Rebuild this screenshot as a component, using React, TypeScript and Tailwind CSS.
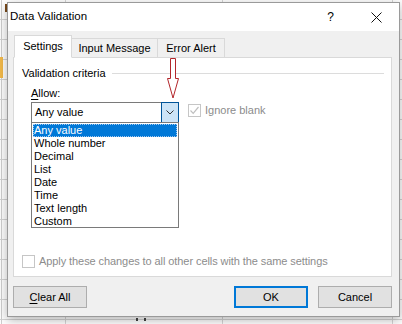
import React from 'react';

const listItems = ['Any value', 'Whole number', 'Decimal', 'List', 'Date', 'Time', 'Text length', 'Custom'];

function Tab({ label, active, width }: { label: string; active?: boolean; width: string }) {
  return (
    <div
      className={`${width} flex items-center justify-center border border-[#d9d9d9] ${
        active ? 'h-[23px] bg-white border-b-white relative z-10' : 'h-[20px] bg-[#f0f0f0] -ml-px'
      }`}
    >
      {label}
    </div>
  );
}

function Checkbox({ checked }: { checked?: boolean }) {
  return (
    <div className="w-[13px] h-[13px] border border-[#c6c6c6] bg-white flex items-center justify-center shrink-0">
      {checked && (
        <svg width="11" height="11" viewBox="0 0 11 11">
          <path d="M1.5 5.5 L4.2 8.3 L9.5 2" fill="none" stroke="#bfbfbf" strokeWidth="1.2" />
        </svg>
      )}
    </div>
  );
}

function Button({ children, primary }: { children: React.ReactNode; primary?: boolean }) {
  return (
    <div
      className={`w-[74px] h-[22px] flex items-center justify-center bg-[#e1e1e1] ${
        primary ? 'border-2 border-[#0078d7]' : 'border border-[#adadad]'
      }`}
    >
      {children}
    </div>
  );
}

export default function App() {
  return (
    <div
      className="relative w-[402px] h-[324px] overflow-hidden bg-white pt-[2px] pl-[7px] text-[11px] text-black"
      style={{ fontFamily: '"Liberation Sans", Arial, sans-serif' }}
    >
      {/* spreadsheet grid behind the dialog */}
      <div className="absolute inset-0 bg-[linear-gradient(to_right,transparent_1px,#cfcfcf_1px,#cfcfcf_2px,transparent_2px,transparent_65px,#d6d6d6_65px,#d6d6d6_66px,transparent_66px,transparent_222px,#d6d6d6_222px,#d6d6d6_223px,transparent_223px,transparent_392px,#d6d6d6_392px,#d6d6d6_393px,transparent_393px),linear-gradient(to_bottom,transparent_19px,#d6d6d6_19px,#d6d6d6_20px,transparent_20px)] bg-[length:100%_100%,100%_20px]" />
      <div className="absolute left-0 top-[57px] w-[3px] h-[21px] bg-[#f3b94a]" />
      <div className="absolute left-[5px] top-[4px] w-[2px] h-[8px] bg-[#7a4a1a]" />
      <div className="absolute left-[136px] top-[318px] w-[2px] h-[3px] bg-[#444]" />
      <div className="absolute left-[144px] top-[318px] w-[2px] h-[3px] bg-[#444]" />

      {/* dialog */}
      <div className="relative w-[393px] h-[315px] border border-[#9a9a9a] bg-[#f0f0f0] shadow-[0_3px_10px_rgba(0,0,0,0.3)] flex flex-col">
        {/* title bar */}
        <div className="h-[28px] bg-white flex items-center pl-[2px] pr-[17px] text-[11.5px] shrink-0">
          <span>Data Validation</span>
          <span className="ml-auto mr-[37px] text-[12px]">?</span>
          <svg width="11" height="11" viewBox="0 0 11 11">
            <path d="M0.5 0.5 L10.5 10.5 M10.5 0.5 L0.5 10.5" stroke="#111" strokeWidth="1" />
          </svg>
        </div>

        {/* body */}
        <div className="flex-1 flex flex-col px-[5px] pr-[7px]">
          <div className="flex items-end mt-[4px] ml-px -mb-px">
            <Tab label="Settings" active width="w-[58px]" />
            <Tab label="Input Message" width="w-[87px]" />
            <Tab label="Error Alert" width="w-[68px]" />
          </div>

          <div className="h-[220px] bg-white border border-[#d9d9d9] flex flex-col">
            <div className="flex items-center mt-[8px] pl-[8px] pr-[7px] h-[14px]">
              <span>Validation criteria</span>
              <div className="flex-1 h-px bg-[#dcdcdc] ml-[6px]" />
            </div>

            <div className="flex pl-[17px] mt-[6px]">
              <div className="flex flex-col">
                <div className="h-[14px] leading-[14px]">
                  <span className="underline underline-offset-2">A</span>llow:
                </div>
                <div className="flex h-[21px] mt-[2px]">
                  <div className="w-[130px] border-y border-l border-[#7a7a7a] bg-white flex items-center pl-[3px]">
                    Any value
                  </div>
                  <div className="w-[18px] border border-[#005499] bg-[#cce4f7] flex items-center justify-center">
                    <svg width="8" height="5" viewBox="0 0 8 5">
                      <path d="M0.5 0.5 L4 4 L7.5 0.5" fill="none" stroke="#333" strokeWidth="1" />
                    </svg>
                  </div>
                </div>
                <div className="w-[148px] h-[106px] border border-[#7a7a7a] -mt-px bg-white p-px">
                  {listItems.map((item, i) => (
                    <div
                      key={item}
                      className={`h-[13px] leading-[13px] pl-px ${
                        i === 0 ? 'bg-[#0078d7] text-white outline outline-1 outline-dotted outline-[#9fc7ee] -outline-offset-1' : ''
                      }`}
                    >
                      {item}
                    </div>
                  ))}
                </div>
              </div>

              <div className="flex items-center gap-[4px] ml-[9px] mt-[18px] h-[13px] text-[#8c8c8c]">
                <Checkbox checked />
                <span>Ignore blank</span>
              </div>
            </div>

            <div className="flex items-center gap-[4px] pl-[8px] mt-[25px] text-[#8c8c8c]">
              <Checkbox />
              <span className="tracking-[-0.08px]">Apply these changes to all other cells with the same settings</span>
            </div>
          </div>

          <div className="flex items-center justify-between mt-[9px]">
            <Button>
              <span className="underline underline-offset-2">C</span>lear All
            </Button>
            <div className="flex gap-[10px]">
              <Button primary>OK</Button>
              <Button>Cancel</Button>
            </div>
          </div>
        </div>

        {/* red annotation arrow */}
        <svg className="absolute left-[158px] top-[55px]" width="14" height="42" viewBox="0 0 14 42">
          <path d="M4.5 0.5 H9.5 V20.5 H12.5 L7 40 L1.5 20.5 H4.5 Z" fill="white" stroke="#b3262b" strokeWidth="1" />
        </svg>
      </div>
    </div>
  );
}
